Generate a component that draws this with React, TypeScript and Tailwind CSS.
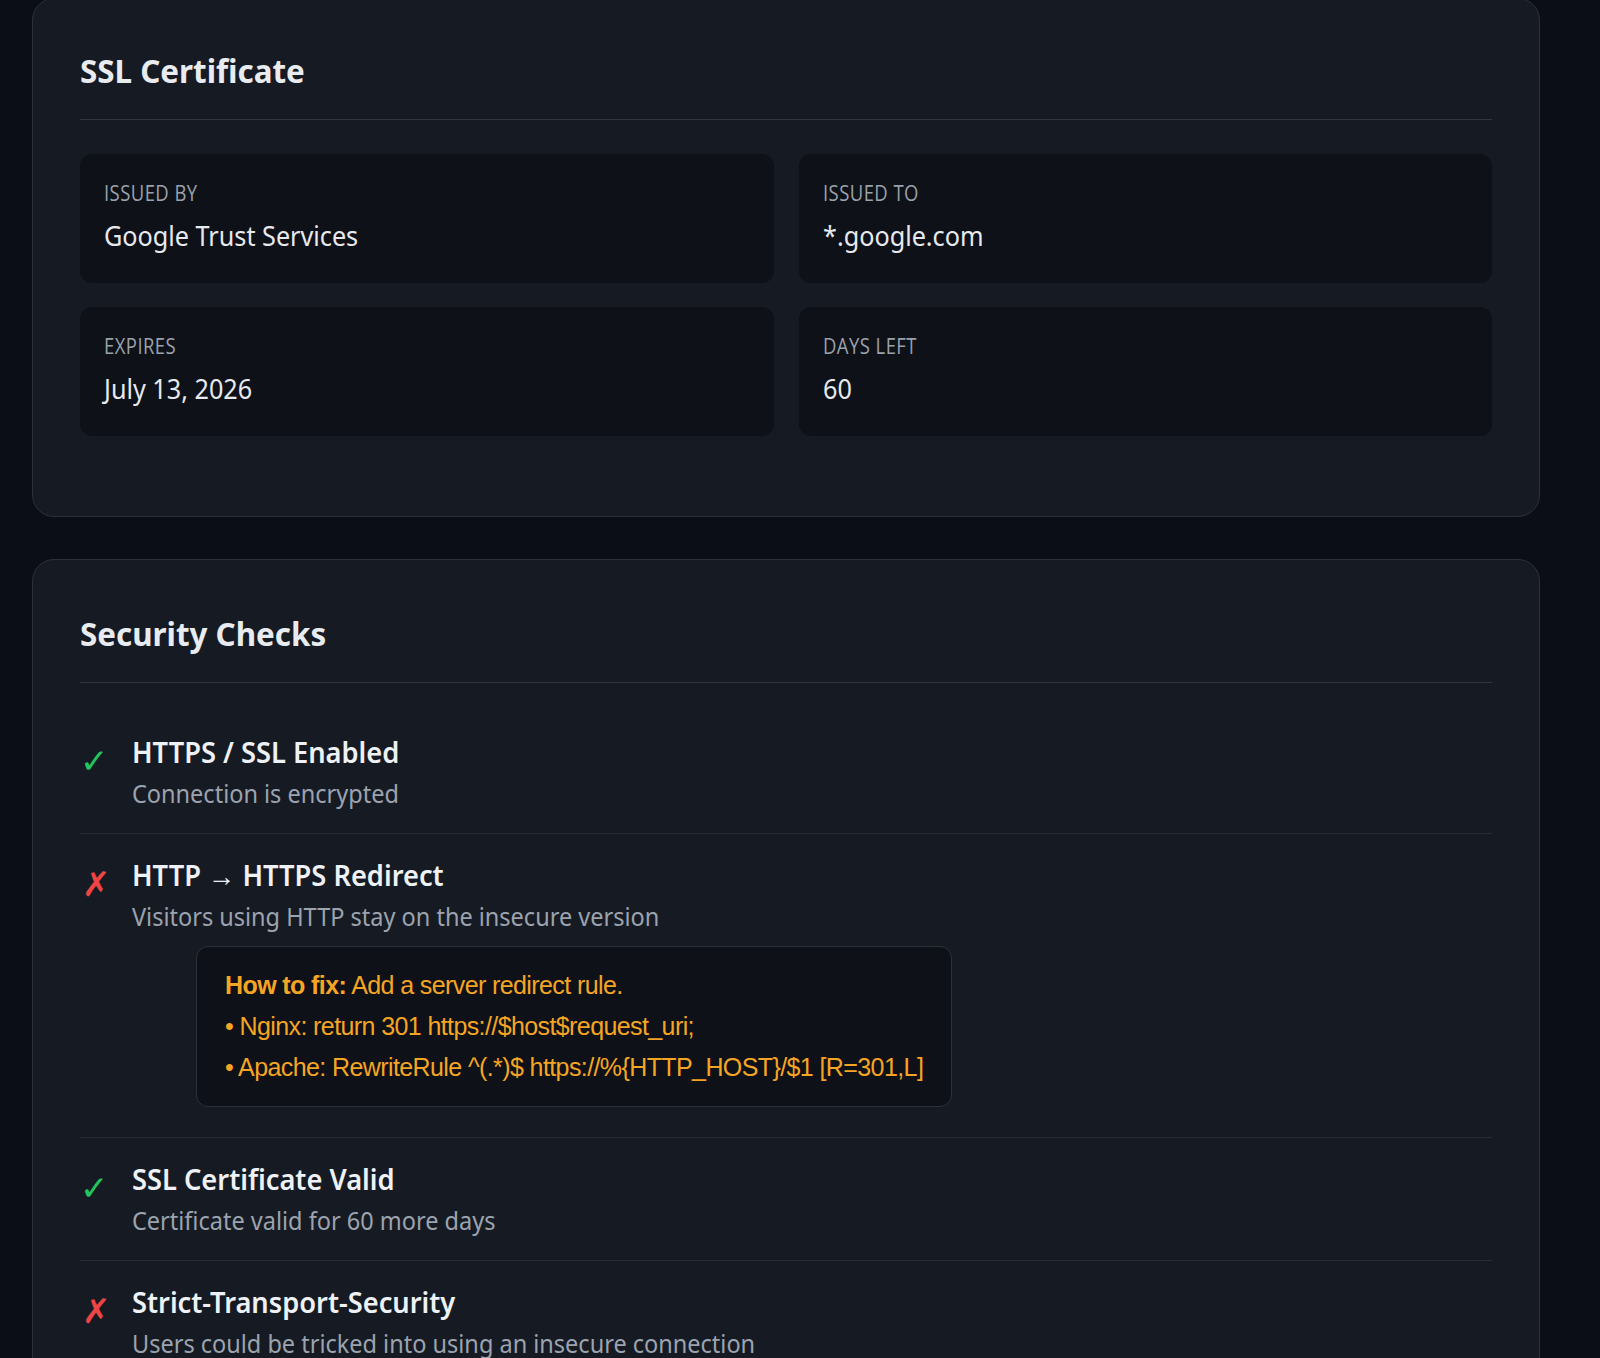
import React from "react";

const font = { fontFamily: '"Noto Sans", "Open Sans", sans-serif' };

function Info({ label, value }: { label: string; value: string }) {
  return (
    <div className="bg-[#0e1117] rounded-xl px-6 pt-[24px] h-[129px]">
      <div className="text-[21px] tracking-[0.5px] text-[#9aa1ab] uppercase leading-[30px]" style={{ fontFamily: '"Open Sans", "Noto Sans", sans-serif', transform: "scaleX(0.88)", transformOrigin: "left" }}>{label}</div>
      <div className="text-[28px] text-[#e6e9ee] mt-[8px] leading-[38px]" style={{ transform: "scaleX(0.9)", transformOrigin: "left" }}>{value}</div>
    </div>
  );
}

function Check({ ok, title, desc, children, last }: { ok: boolean; title: string; desc: string; children?: React.ReactNode; last?: boolean }) {
  return (
    <div className={`flex pt-[22px] pb-[22px] ${last ? "" : "border-b border-[#262c36]"}`}>
      <div className={`w-[52px] shrink-0 text-[34px] leading-none pt-[10px] ${ok ? "text-[#22c55e]" : "text-[#ef4444] pl-[2px]"}`}>{ok ? "✓" : "✗"}</div>
      <div className="flex-1">
        <div className="text-[29px] font-semibold text-[#eef1f5] leading-[38px]" style={{ transform: "scaleX(0.94)", transformOrigin: "left" }}>{title}</div>
        <div className="text-[25px] text-[#9ca3af] leading-[36px] mt-[4px]" style={{ transform: "scaleX(0.94)", transformOrigin: "left" }}>{desc}</div>
        {children}
      </div>
    </div>
  );
}

export default function App() {
  return (
    <div className="bg-[#0b0e17] min-h-[1358px] w-[1600px] overflow-hidden" style={font}>
      <div className="pl-[32px] w-[1540px] flex flex-col gap-[42px]">
        <div className="bg-[#161b23] border border-[#2b313b] rounded-[22px] px-[47px] pt-[50px] pb-[80px] -mt-[2px]">
          <h2 className="text-[33px] font-bold text-[#e8ebf0] leading-[44px]" style={{ transform: "scaleX(0.95)", transformOrigin: "left" }}>SSL Certificate</h2>
          <div className="border-b border-[#30363f] mt-[26px] mb-[34px]" />
          <div className="grid grid-cols-2 gap-x-[25px] gap-y-[24px]">
            <Info label="Issued By" value="Google Trust Services" />
            <Info label="Issued To" value="*.google.com" />
            <Info label="Expires" value="July 13, 2026" />
            <Info label="Days Left" value="60" />
          </div>
        </div>
        <div className="bg-[#161b23] border border-[#2b313b] rounded-[22px] px-[47px] pt-[52px] pb-[40px]">
          <h2 className="text-[33px] font-bold text-[#e8ebf0] leading-[44px]" style={{ transform: "scaleX(0.95)", transformOrigin: "left" }}>Security Checks</h2>
          <div className="border-b border-[#30363f] mt-[26px] mb-[28px]" />
          <Check ok title="HTTPS / SSL Enabled" desc="Connection is encrypted" />
          <Check ok={false} title="HTTP → HTTPS Redirect" desc="Visitors using HTTP stay on the insecure version">
            <div className="ml-[64px] mt-[12px] mb-[8px] inline-block bg-[#0e1117] border border-[#2b313b] rounded-xl px-[28px] py-[18px] text-[#f5a524] text-[25px] leading-[41px]" style={{ fontFamily: '"Liberation Sans", Arial, sans-serif', letterSpacing: "-0.6px" }}>
              <div><b>How to fix:</b> Add a server redirect rule.</div>
              <div>• Nginx: return 301 https://$host$request_uri;</div>
              <div>• Apache: RewriteRule ^(.*)$ https://%{"{"}HTTP_HOST{"}"}/$1 [R=301,L]</div>
            </div>
          </Check>
          <Check ok title="SSL Certificate Valid" desc="Certificate valid for 60 more days" />
          <Check ok={false} title="Strict-Transport-Security" desc="Users could be tricked into using an insecure connection" last />
        </div>
      </div>
    </div>
  );
}
